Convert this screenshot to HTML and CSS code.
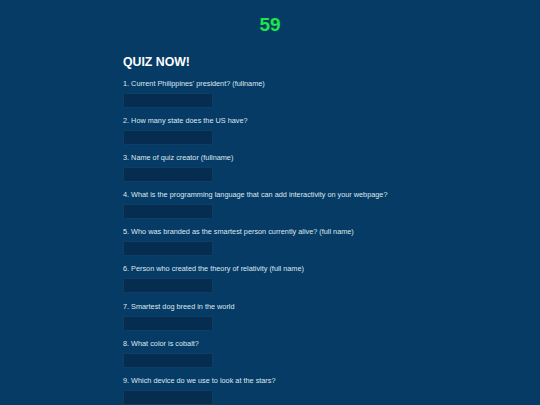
FILE: index.html
```html
<!DOCTYPE html>
<html>
<head>
<meta charset="utf-8">
<link rel="stylesheet" href="styles.css">
</head>
<body>
<div class="timer">59</div>
<main class="quiz">
  <h1 class="title">QUIZ NOW!</h1>
  <div class="q"><label>1. Current Philippines' president? (fullname)</label><input type="text"></div>
  <div class="q"><label>2. How many state does the US have?</label><input type="text"></div>
  <div class="q"><label>3. Name of quiz creator (fullname)</label><input type="text"></div>
  <div class="q"><label>4. What is the programming language that can add interactivity on your webpage?</label><input type="text"></div>
  <div class="q"><label>5. Who was branded as the smartest person currently alive? (full name)</label><input type="text"></div>
  <div class="q"><label>6. Person who created the theory of relativity (full name)</label><input type="text"></div>
  <div class="q"><label>7. Smartest dog breed in the world</label><input type="text"></div>
  <div class="q"><label>8. What color is cobalt?</label><input type="text"></div>
  <div class="q"><label>9. Which device do we use to look at the stars?</label><input type="text"></div>
</main>
</body>
</html>
```
FILE: styles.css
```css
html, body {
  margin: 0;
  padding: 0;
  background: #053b64;
  font-family: "Liberation Sans", Arial, sans-serif;
}
.timer {
  text-align: center;
  color: #1ee54a;
  font-weight: bold;
  font-size: 19px;
  line-height: 22px;
  padding-top: 14px;
  height: 36px;
}
.quiz {
  padding-left: 123px;
}
.title {
  margin: 0;
  color: #ffffff;
  font-size: 12.3px;
  line-height: 20px;
  font-weight: bold;
  padding-top: 2px;
  margin-bottom: 7px;
}
.q {
  display: flex;
  flex-direction: column;
  align-items: flex-start;
  height: 37.1px;
}
.q label {
  color: #dde8f2;
  font-size: 7.3px;
  line-height: 10px;
  margin-bottom: 4px;
}
.q input {
  box-sizing: border-box;
  width: 90px;
  height: 15px;
  margin: 0;
  padding: 0;
  background: #062c50;
  border: 1px solid #0b3f68;
  border-radius: 1px;
}
```
